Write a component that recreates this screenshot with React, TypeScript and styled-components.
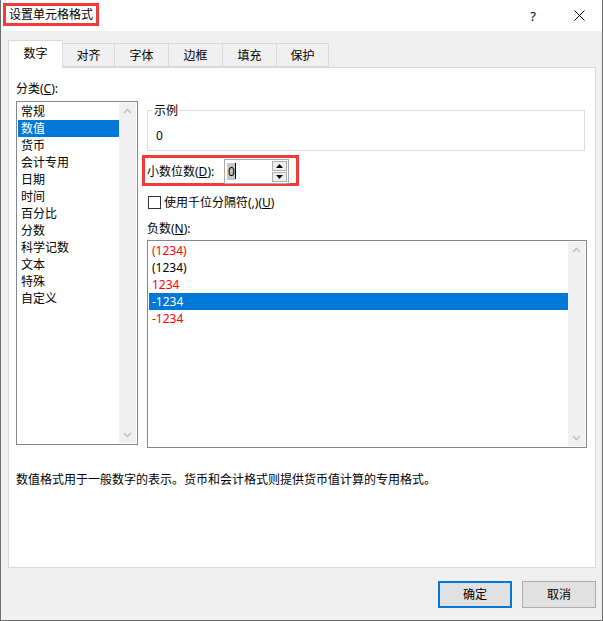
import React from 'react';
import styled, { createGlobalStyle } from 'styled-components';

const Global = createGlobalStyle`
  html, body { margin: 0; padding: 0; background: #fff; }
  body {
    font-family: "Noto Sans", "Noto Sans CJK SC", sans-serif;
    font-size: 12px;
    color: #000;
  }
  * { box-sizing: border-box; }
`;

const Window = styled.div`
  width: 603px;
  height: 621px;
  border: 1px solid #6d6d6d;
  border-top: none;
  background: #f0f0f0;
  display: flex;
  flex-direction: column;
`;

const TitleBar = styled.div`
  height: 31px;
  background: #fff;
  display: flex;
  align-items: center;
  padding-left: 2px;
  flex-shrink: 0;
`;

const Title = styled.div`
  border: 3px solid #ef3b3b;
  height: 23px;
  padding: 0 3px;
  display: flex;
  align-items: center;
  line-height: 17px;
  margin-top: -2px;
`;

const TitleButtons = styled.div`
  margin-left: auto;
  display: flex;
  height: 100%;
`;

const TitleButton = styled.div`
  width: 46px;
  height: 100%;
  display: flex;
  align-items: center;
  justify-content: center;
  font-size: 13px;
  color: #000;
`;

const Body = styled.div`
  flex: 1;
  display: flex;
  flex-direction: column;
  padding: 9px 6px 0 7px;
`;

const TabRow = styled.div`
  display: flex;
  align-items: flex-end;
  height: 27px;
  position: relative;
  z-index: 1;
`;

const Tab = styled.div<{ $active?: boolean; $w: number }>`
  height: ${p => (p.$active ? 28 : 24)}px;
  width: ${p => p.$w}px;
  display: flex;
  align-items: center;
  justify-content: center;
  background: ${p => (p.$active ? '#fff' : '#f0f0f0')};
  border: 1px solid #d9d9d9;
  border-bottom: ${p => (p.$active ? 'none' : '1px solid #d9d9d9')};
  margin-left: -1px;
  margin-bottom: ${p => (p.$active ? -1 : 0)}px;
  padding-bottom: ${p => (p.$active ? 2 : 0)}px;
  line-height: 17px;
  &:first-child { margin-left: 0; }
`;

const Panel = styled.div`
  width: 588px;
  height: 501px;
  background: #fff;
  border: 1px solid #d9d9d9;
  padding: 12px 7px 0 7px;
  display: flex;
  flex-direction: column;
`;

const Columns = styled.div`
  display: flex;
  gap: 9px;
`;

const LeftCol = styled.div`
  width: 122px;
  display: flex;
  flex-direction: column;
`;

const RightCol = styled.div`
  width: 440px;
  display: flex;
  flex-direction: column;
  padding-top: 30px;
`;

const Label = styled.div`
  line-height: 17px;
  height: 17px;
  white-space: nowrap;
`;

const ListBox = styled.div<{ $h: number; $mt: number }>`
  height: ${p => p.$h}px;
  margin-top: ${p => p.$mt}px;
  border: 1px solid #828790;
  padding: 1px;
  display: flex;
  background: #fff;
`;

const Items = styled.div`
  flex: 1;
  display: flex;
  flex-direction: column;
`;

const Item = styled.div<{ $sel?: boolean; $red?: boolean }>`
  height: 17px;
  line-height: 17px;
  padding-left: 3px;
  white-space: nowrap;
  background: ${p => (p.$sel ? '#0078d7' : 'transparent')};
  color: ${p => (p.$sel ? '#fff' : p.$red ? '#ff0000' : '#000')};
`;

const ScrollBar = styled.div`
  width: 17px;
  background: #f0f0f0;
  display: flex;
  flex-direction: column;
  justify-content: space-between;
  align-items: center;
  padding: 5px 0 5px;
`;

const Group = styled.div`
  position: relative;
  width: 438px;
  height: 41px;
  border: 1px solid #dcdcdc;
  padding: 16px 0 0 8px;
  line-height: 17px;
`;

const GroupLabel = styled.span`
  position: absolute;
  top: -9px;
  left: 5px;
  padding: 0 1px;
  background: #fff;
  line-height: 17px;
`;

const RedFrame = styled.div`
  margin-top: 4px;
  margin-left: -5px;
  width: 157px;
  height: 31px;
  border: 3px solid #ef3b3b;
  display: flex;
  align-items: center;
  padding: 1px 7px 0 2px;
  justify-content: space-between;
`;

const Spinner = styled.div`
  width: 65px;
  height: 25px;
  border: 1px solid #a8a8a8;
  display: flex;
  align-items: center;
  padding: 0 1px 0 2px;
`;

const SpinText = styled.div`
  flex: 1;
  display: flex;
  align-items: center;
  line-height: 17px;
`;

const Selected = styled.span`
  background: #c8c8c8;
  padding: 0 0 0 1px;
`;

const Caret = styled.span`
  display: inline-block;
  width: 1px;
  height: 16px;
  background: #000;
`;

const SpinButtons = styled.div`
  display: flex;
  flex-direction: column;
  gap: 1px;
`;

const SpinBtn = styled.div`
  width: 15px;
  height: 10px;
  border: 1px solid #adadad;
  background: #efefef;
  display: flex;
  align-items: center;
  justify-content: center;
`;

const CheckRow = styled.div`
  display: flex;
  align-items: center;
  gap: 3px;
  margin-top: 8px;
  margin-left: 1px;
  line-height: 17px;
`;

const CheckBox = styled.div`
  width: 13px;
  height: 13px;
  border: 1px solid #333;
  background: #fff;
`;

const NegLabel = styled(Label)`
  margin-top: 9px;
`;

const Description = styled.div`
  margin-top: 23px;
  line-height: 17px;
`;

const Footer = styled.div`
  flex: 1;
  display: flex;
  justify-content: flex-end;
  align-items: flex-start;
  gap: 10px;
  padding-top: 13px;
  padding-right: 0px;
`;

const Button = styled.div<{ $primary?: boolean }>`
  width: 74px;
  height: 27px;
  background: #e1e1e1;
  border: ${p => (p.$primary ? '2px solid #0078d7' : '1px solid #adadad')};
  display: flex;
  align-items: center;
  justify-content: center;
  line-height: 17px;
`;

const Up = () => (
  <svg width="9" height="6" viewBox="0 0 9 6">
    <path d="M1 5 L4.5 1.5 L8 5" fill="none" stroke="#c2c2c2" strokeWidth="1.6" />
  </svg>
);
const Down = () => (
  <svg width="9" height="6" viewBox="0 0 9 6">
    <path d="M1 1 L4.5 4.5 L8 1" fill="none" stroke="#c2c2c2" strokeWidth="1.6" />
  </svg>
);

const Tri = ({ up }: { up?: boolean }) => (
  <svg width="7" height="4" viewBox="0 0 7 4">
    <path d={up ? 'M0 4 L3.5 0 L7 4 Z' : 'M0 0 L3.5 4 L7 0 Z'} fill="#000" />
  </svg>
);

const categories = ['常规', '数值', '货币', '会计专用', '日期', '时间', '百分比', '分数', '科学记数', '文本', '特殊', '自定义'];
const negatives: { t: string; red: boolean }[] = [
  { t: '(1234)', red: true },
  { t: '(1234)', red: false },
  { t: '1234', red: true },
  { t: '-1234', red: false },
  { t: '-1234', red: true },
];
const tabs: [string, number][] = [
  ['数字', 55],
  ['对齐', 53],
  ['字体', 55],
  ['边框', 55],
  ['填充', 55],
  ['保护', 53],
];

export default function App() {
  return (
    <>
      <Global />
      <Window>
        <TitleBar>
          <Title>设置单元格格式</Title>
          <TitleButtons>
            <TitleButton>?</TitleButton>
            <TitleButton>
              <svg width="11" height="11" viewBox="0 0 11 11">
                <path d="M0.5 0.5 L10.5 10.5 M10.5 0.5 L0.5 10.5" stroke="#000" strokeWidth="1" />
              </svg>
            </TitleButton>
          </TitleButtons>
        </TitleBar>
        <Body>
          <TabRow>
            {tabs.map(([t, w], i) => (
              <Tab key={t} $active={i === 0} $w={w}>
                {t}
              </Tab>
            ))}
          </TabRow>
          <Panel>
            <Columns>
              <LeftCol>
                <Label>
                  分类(<u>C</u>):
                </Label>
                <ListBox $h={344} $mt={4}>
                  <Items>
                    {categories.map((c, i) => (
                      <Item key={c} $sel={i === 1}>
                        {c}
                      </Item>
                    ))}
                  </Items>
                  <ScrollBar>
                    <Up />
                    <Down />
                  </ScrollBar>
                </ListBox>
              </LeftCol>
              <RightCol>
                <Group>
                  <GroupLabel>示例</GroupLabel>
                  0
                </Group>
                <RedFrame>
                  <Label>
                    小数位数(<u>D</u>):
                  </Label>
                  <Spinner>
                    <SpinText>
                      <Selected>0</Selected>
                      <Caret />
                    </SpinText>
                    <SpinButtons>
                      <SpinBtn>
                        <Tri up />
                      </SpinBtn>
                      <SpinBtn>
                        <Tri />
                      </SpinBtn>
                    </SpinButtons>
                  </Spinner>
                </RedFrame>
                <CheckRow>
                  <CheckBox />
                  <span>
                    使用千位分隔符(,)(<u>U</u>)
                  </span>
                </CheckRow>
                <NegLabel>
                  负数(<u>N</u>):
                </NegLabel>
                <ListBox $h={208} $mt={3}>
                  <Items>
                    {negatives.map((n, i) => (
                      <Item key={i} $sel={i === 3} $red={n.red}>
                        {n.t}
                      </Item>
                    ))}
                  </Items>
                  <ScrollBar>
                    <Up />
                    <Down />
                  </ScrollBar>
                </ListBox>
              </RightCol>
            </Columns>
            <Description>数值格式用于一般数字的表示。货币和会计格式则提供货币值计算的专用格式。</Description>
          </Panel>
          <Footer>
            <Button $primary>确定</Button>
            <Button>取消</Button>
          </Footer>
        </Body>
      </Window>
    </>
  );
}
